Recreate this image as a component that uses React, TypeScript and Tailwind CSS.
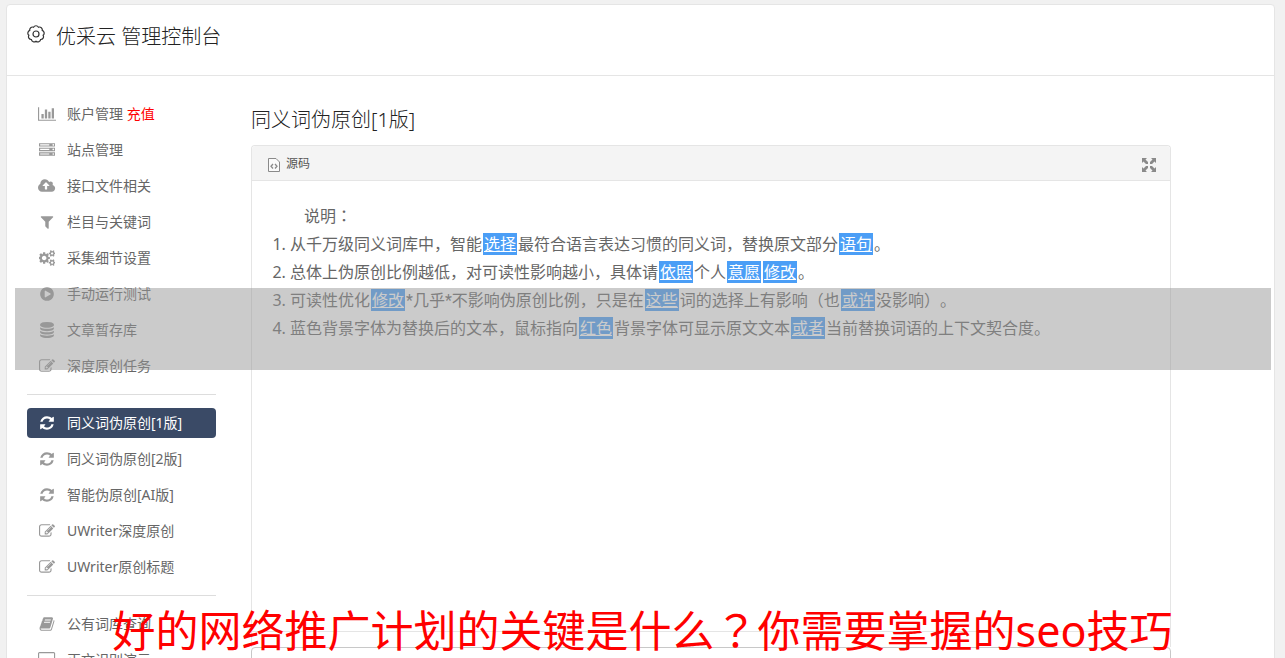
import type { ReactNode } from "react";

const paths = {
  chart:
    "M640 896v512h-256v-512h256zm384-512v1024h-256v-1024h256zm1024 1152v128h-2048v-1536h128v1408h1920zm-640-896v768h-256v-768h256zm384-384v1152h-256v-1152h256z",
  server:
    "M128 1408h1024v-128h-1024v128zm0-512h1024v-128h-1024v128zm1568 448q0-40-28-68t-68-28-68 28-28 68 28 68 68 28 68-28 28-68zm-1568-960h1024v-128h-1024v128zm1568 448q0-40-28-68t-68-28-68 28-28 68 28 68 68 28 68-28 28-68zm0-512q0-40-28-68t-68-28-68 28-28 68 28 68 68 28 68-28 28-68zm96 832v384h-1792v-384h1792zm0-512v384h-1792v-384h1792zm0-512v384h-1792v-384h1792z",
  cloud:
    "M1280 864q0-14-9-23l-352-352q-9-9-23-9t-23 9l-351 351q-10 12-10 24 0 14 9 23t23 9h224v352q0 13 9.5 22.5t22.5 9.5h192q13 0 22.5-9.5t9.5-22.5v-352h224q13 0 22.5-9.5t9.5-22.5zm640 288q0 159-112.5 271.5t-271.5 112.5h-1088q-185 0-316.5-131.5t-131.5-316.5q0-130 70-240t188-165q-2-30-2-43 0-212 150-362t362-150q156 0 285.5 87t188.5 231q71-62 166-62 106 0 181 75t75 181q0 76-41 138 130 31 213.5 135.5t83.5 238.5z",
  filter:
    "M1595 295q17 41-14 70l-493 493v742q0 42-39 59-13 5-25 5-27 0-45-19l-256-256q-19-19-19-45v-486l-493-493q-31-29-14-70 17-39 59-39h1280q42 0 59 39z",
  cogs:
    "M832 896q0-106-75-181t-181-75-181 75-75 181 75 181 181 75 181-75 75-181zm768 512q0-52-38-90t-90-38-90 38-38 90q0 53 37.5 90.5t90.5 37.5 90.5-37.5 37.5-90.5zm0-1024q0-52-38-90t-90-38-90 38-38 90q0 53 37.5 90.5t90.5 37.5 90.5-37.5 37.5-90.5zm-384 421v185q0 10-7 19.5t-16 10.5l-155 24q-11 35-32 76 34 48 90 115 7 11 7 20 0 12-7 19-23 30-82.5 89.5t-78.5 59.5q-11 0-21-7l-115-90q-37 19-77 31-11 108-23 155-7 24-30 24h-186q-11 0-20-7.5t-10-17.5l-23-153q-34-10-75-31l-118 89q-7 7-20 7-11 0-21-8-144-133-144-160 0-9 7-19 10-14 41-53t47-61q-23-44-35-82l-152-24q-10-1-17-9.5t-7-19.5v-185q0-10 7-19.5t16-10.5l155-24q11-35 32-76-34-48-90-115-7-11-7-20 0-12 7-20 22-30 82-89t79-59q11 0 21 7l115 90q34-18 77-32 11-108 23-154 7-24 30-24h186q11 0 20 7.5t10 17.5l23 153q34 10 75 31l118-89q8-7 20-7 11 0 21 8 144 133 144 160 0 8-7 19-12 16-42 54t-45 60q23 48 34 82l152 23q10 2 17 10.5t7 19.5zm640 533v140q0 16-149 31-12 27-30 52 51 113 51 138 0 4-4 7-122 71-124 71-8 0-46-47t-52-68q-20 2-30 2t-30-2q-14 21-52 68t-46 47q-2 0-124-71-4-3-4-7 0-25 51-138-18-25-30-52-149-15-149-31v-140q0-16 149-31 13-29 30-52-51-113-51-138 0-4 4-7 4-2 35-20t59-34 30-16q8 0 46 46.5t52 67.5q20-2 30-2t30 2q51-71 92-112l6-2q4 0 124 70 4 3 4 7 0 25-51 138 17 23 30 52 149 15 149 31zm0-1024v140q0 16-149 31-12 27-30 52 51 113 51 138 0 4-4 7-122 71-124 71-8 0-46-47t-52-68q-20 2-30 2t-30-2q-14 21-52 68t-46 47q-2 0-124-71-4-3-4-7 0-25 51-138-18-25-30-52-149-15-149-31v-140q0-16 149-31 13-29 30-52-51-113-51-138 0-4 4-7 4-2 35-20t59-34 30-16q8 0 46 46.5t52 67.5q20-2 30-2t30 2q51-71 92-112l6-2q4 0 124 70 4 3 4 7 0 25-51 138 17 23 30 52 149 15 149 31z",
  play:
    "M896 128q209 0 385.5 103t279.5 279.5 103 385.5-103 385.5-279.5 279.5-385.5 103-385.5-103-279.5-279.5-103-385.5 103-385.5 279.5-279.5 385.5-103zm384 823q32-18 32-55t-32-55l-544-320q-31-19-64-1-32 19-32 56v640q0 37 32 56 16 8 32 8 17 0 32-9z",
  database:
    "M896 768q237 0 443-43t325-127v170q0 69-103 128t-280 93.5-385 34.5-385-34.5-280-93.5-103-128v-170q119 84 325 127t443 43zm0 768q237 0 443-43t325-127v170q0 69-103 128t-280 93.5-385 34.5-385-34.5-280-93.5-103-128v-170q119 84 325 127t443 43zm0-384q237 0 443-43t325-127v170q0 69-103 128t-280 93.5-385 34.5-385-34.5-280-93.5-103-128v-170q119 84 325 127t443 43zm0-1152q208 0 385 34.5t280 93.5 103 128v128q0 69-103 128t-280 93.5-385 34.5-385-34.5-280-93.5-103-128v-128q0-69 103-128t280-93.5 385-34.5z",
  edit:
    "M888 1184l116-116-152-152-116 116v56h96v96h56zm440-720q-16-16-33 1l-350 350q-17 17-1 33t33-1l350-350q17-17 1-33zm80 594v190q0 119-84.5 203.5t-203.5 84.5h-832q-119 0-203.5-84.5t-84.5-203.5v-832q0-119 84.5-203.5t203.5-84.5h832q63 0 117 25 15 7 18 23 3 17-9 29l-49 49q-14 14-32 8-23-6-45-6h-832q-66 0-113 47t-47 113v832q0 66 47 113t113 47h832q66 0 113-47t47-113v-126q0-13 9-22l64-64q15-15 35-7t20 29zm-96-738l288 288-672 672h-288v-288zm444 132l-92 92-288-288 92-92q28-28 68-28t68 28l152 152q28 28 28 68t-28 68z",
  refresh:
    "M1639 1056q0 5-1 7-64 268-268 434.5t-478 166.5q-146 0-282.5-55t-243.5-157l-129 129q-19 19-45 19t-45-19-19-45v-448q0-26 19-45t45-19h448q26 0 45 19t19 45-19 45l-137 137q71 66 161 102t187 36q134 0 250-65t186-179q11-17 53-117 8-23 30-23h192q13 0 22.5 9.5t9.5 22.5zm25-800v448q0 26-19 45t-45 19h-448q-26 0-45-19t-19-45 19-45l138-138q-148-137-349-137-134 0-250 65t-186 179q-11 17-53 117-8 23-30 23h-199q-13 0-22.5-9.5t-9.5-22.5v-7q65-268 270-434.5t480-166.5q146 0 284 55.5t245 156.5l130-129q19-19 45-19t45 19 19 45z",
  book:
    "M1703 478q40 57 18 129l-275 906q-19 64-76.5 107.5t-122.5 43.5h-923q-77 0-148.5-53.5t-99.5-131.5q-24-67-2-127 0-4 3-27t4-37q1-8-3-21.5t-3-19.5q2-11 8-21t16.5-23.5 16.5-23.5q23-38 45-91.5t30-91.5q3-10 .5-30t-.5-28q3-11 17-28t17-23q21-36 42-92t25-90q1-9-2.5-32t.5-28q4-13 22-30.5t22-22.5q19-26 42.5-84.5t27.5-96.5q1-8-3-25.5t-2-26.5q2-8 9-18t18-23 17-21q8-12 16.5-30.5t15-35 16-36 19.5-32 26.5-23.5 36-11.5 47.5 5.5l-1 3q38-9 51-9h761q74 0 114 56t18 130l-274 906q-36 119-71.5 153.5t-128.5 34.5h-869q-27 0-38 15-11 16-1 43 24 70 144 70h923q29 0 56-15.5t35-41.5l300-987q7-22 5-57 38 15 59 43zm-1064 2q-4 13 2 22.5t20 9.5h608q13 0 25.5-9.5t16.5-22.5l21-64q4-13-2-22.5t-20-9.5h-608q-13 0-25.5 9.5t-16.5 22.5zm-83 256q-4 13 2 22.5t20 9.5h608q13 0 25.5-9.5t16.5-22.5l21-64q4-13-2-22.5t-20-9.5h-608q-13 0-25.5 9.5t-16.5 22.5z",
  desktop:
    "M1728 992v-832q0-13-9.500-22.500t-22.500-9.500h-1600q-13 0-22.500 9.500t-9.500 22.500v832q0 13 9.500 22.500t22.500 9.500h1600q13 0 22.500-9.500t9.500-22.500zm128-832v1088q0 66-47 113t-113 47h-544q0 37 16 77.500t32 71 16 43.500q0 26-19 45t-45 19h-512q-26 0-45-19t-19-45q0-14 16-44t32-70 16-78h-544q-66 0-113-47t-47-113v-1088q0-66 47-113t113-47h1600q66 0 113 47t47 113z",
};

type IconName = keyof typeof paths;

const wide: Partial<Record<IconName, string>> = {
  chart: "0 0 2048 1792",
  cloud: "0 0 1920 1792",
  cogs: "0 0 1856 1792",
  desktop: "-64 0 1920 1792",
};

function MenuIcon({ name }: { name: IconName }) {
  return (
    <span className="flex w-5 shrink-0 justify-center">
      <svg viewBox={wide[name] ?? "0 0 1792 1792"} className="h-4 w-auto" fill="currentColor" aria-hidden="true">
        <path d={paths[name]} />
      </svg>
    </span>
  );
}

const TEETH = 9;
const gearPath =
  Array.from({ length: TEETH + 1 }, (_, i) => {
    const angle = ((i + 0.5) / TEETH) * Math.PI * 2 - Math.PI / 2;
    const point = `${(9 + 7.2 * Math.cos(angle)).toFixed(2)} ${(9 + 7.2 * Math.sin(angle)).toFixed(2)}`;
    return i === 0 ? `M${point}` : `A2.800 2.800 0 0 1 ${point}`;
  }).join("") + "Z";

interface Item {
  icon: IconName;
  label: string;
  extra?: string;
  active?: boolean;
}

const groups: Item[][] = [
  [
    { icon: "chart", label: "账户管理", extra: "充值" },
    { icon: "server", label: "站点管理" },
    { icon: "cloud", label: "接口文件相关" },
    { icon: "filter", label: "栏目与关键词" },
    { icon: "cogs", label: "采集细节设置" },
    { icon: "play", label: "手动运行测试" },
    { icon: "database", label: "文章暂存库" },
    { icon: "edit", label: "深度原创任务" },
  ],
  [
    { icon: "refresh", label: "同义词伪原创[1版]", active: true },
    { icon: "refresh", label: "同义词伪原创[2版]" },
    { icon: "refresh", label: "智能伪原创[AI版]" },
    { icon: "edit", label: "UWriter深度原创" },
    { icon: "edit", label: "UWriter原创标题" },
  ],
  [
    { icon: "book", label: "公有词库查询" },
    { icon: "desktop", label: "正文识别演示" },
  ],
];

function MenuLink({ item }: { item: Item }) {
  return (
    <a
      href="#"
      className={
        item.active
          ? "flex h-[30px] items-center gap-2.5 rounded bg-[#3a4a66] px-2.5 text-sm text-white"
          : "flex h-[30px] items-center gap-2.5 rounded px-2.5 text-sm text-[#666]"
      }
    >
      <span className={item.active ? "text-white" : "text-[#999]"}>
        <MenuIcon name={item.icon} />
      </span>
      <span className="whitespace-nowrap">
        {item.label}
        {item.extra && <span className="text-[#f00]"> {item.extra}</span>}
      </span>
    </a>
  );
}

function Mark({ children }: { children: ReactNode }) {
  return <u className="mx-px bg-[#4b9ef6] px-px text-white">{children}</u>;
}

function Wide({ children }: { children: ReactNode }) {
  return <span className="font-['Noto_Sans_CJK_TC',sans-serif]">{children}</span>;
}

function Star() {
  return <span className="font-['Roboto',sans-serif] leading-none">*</span>;
}

export default function App() {
  return (
    <div className="relative h-screen overflow-hidden bg-[#f1f1f1] pt-1 pr-2.5 pl-1.5 font-['Noto_Sans','Noto_Sans_CJK_SC',sans-serif] [text-spacing-trim:space-all]">
      <div className="min-h-screen rounded border border-[#e5e5e5] bg-white">
        <header className="flex h-[71px] items-start gap-[11px] border-b border-[#e5e5e5] px-5 pt-4 text-[#222]">
          <svg viewBox="0 0 18 18" className="mt-1 size-[18px]" fill="none" stroke="#333" strokeWidth="1.2" aria-hidden="true">
            <path d={gearPath} />
            <circle cx="9" cy="9" r="3" />
          </svg>
          <h1 className="text-xl leading-8 font-light">优采云 管理控制台</h1>
        </header>
        <div className="flex items-start px-5">
          <nav className="w-[189px] shrink-0 pt-[23px]">
            {groups.map((group, i) => (
              <ul
                key={i}
                className={
                  i === 0
                    ? "flex flex-col gap-1.5"
                    : "mt-[13px] flex flex-col gap-1.5 border-t border-[#ddd] pt-[13px]"
                }
              >
                {group.map((item) => (
                  <li key={item.label}>
                    <MenuLink item={item} />
                  </li>
                ))}
              </ul>
            ))}
          </nav>
          <main className="ml-[35px] w-full max-w-[920px] pt-7">
            <h2 className="text-xl leading-8 font-light text-[#222]">同义词伪原创[1版]</h2>
            <section className="mt-[9px] rounded-t border border-b-0 border-[#e5e5e5]">
              <div className="flex h-[35px] items-center justify-between rounded-t border-b border-[#e5e5e5] bg-[#f4f4f4] pt-0.5 pr-3.5 pl-4 text-[#555]">
                <button type="button" className="flex items-center gap-1.5 text-xs">
                  <svg viewBox="0 0 12 14" className="mt-0.5 h-3.5 w-3" fill="none" stroke="#8a8a8a" aria-hidden="true">
                    <path d="M0.5 0.5H8L11.500 4V13.500H0.500Z" fill="#fafafa" />
                    <path d="M5 6L3 8.300L5 10.500M7 6L9 8.300L7 10.500" strokeWidth="1.300" />
                  </svg>
                  源码
                </button>
                <button type="button" aria-label="全屏">
                  <svg viewBox="0 0 14 14" className="mt-0.5 size-3.5" fill="#8a8a8a" aria-hidden="true">
                    <path d="M0 0H5L3.500 1.500L6 4V6H4L1.500 3.500L0 5ZM14 0V5L12.500 3.500L10 6H8V4L10.500 1.500L9 0ZM0 14V9L1.500 10.500L4 8H6V10L3.500 12.500L5 14ZM14 14H9L10.500 12.500L8 10V8H10L12.500 10.500L14 9Z" />
                  </svg>
                </button>
              </div>
              <div className="min-h-[450px] px-5 pt-5 text-base leading-7 text-[#666]">
                <p className="indent-8">
                  说明<Wide>：</Wide>
                </p>
                <ol className="list-decimal pl-[18px]">
                  <li>
                    从千万级同义词库中，智能<Mark>选择</Mark>最符合语言表达习惯的同义词，替换原文部分<Mark>语句</Mark>。
                  </li>
                  <li>
                    总体上伪原创比例越低，对可读性影响越小，具体请<Mark>依照</Mark>个人<Mark>意愿</Mark>
                    <Mark>修改</Mark>。
                  </li>
                  <li>
                    可读性优化<Mark>修改</Mark>
                    <Star />
                    几乎
                    <Star />
                    不影响伪原创比例，只是在<Mark>这些</Mark>词的选择上有影响（也
                    <Mark>或许</Mark>没影响）。
                  </li>
                  <li>
                    蓝色背景字体为替换后的文本，鼠标指向<Mark>红色</Mark>背景字体可显示原文文本<Mark>或者</Mark>
                    当前替换词语的上下文契合度。
                  </li>
                </ol>
              </div>
              <div className="h-4 border-t border-[#e5e5e5]" />
            </section>
            <div className="h-20 rounded border border-[#c8c8c8]" />
          </main>
        </div>
      </div>
      <div className="absolute top-72 right-3.5 left-[15px] h-[82px] bg-[#989898]/50" />
      <p className="absolute inset-x-0 bottom-0 text-center text-[43px] leading-[54px] whitespace-nowrap text-[#f00]">
        好的网络推广计划的关键是什么<Wide>？</Wide>你需要掌握的seo技巧
      </p>
    </div>
  );
}
